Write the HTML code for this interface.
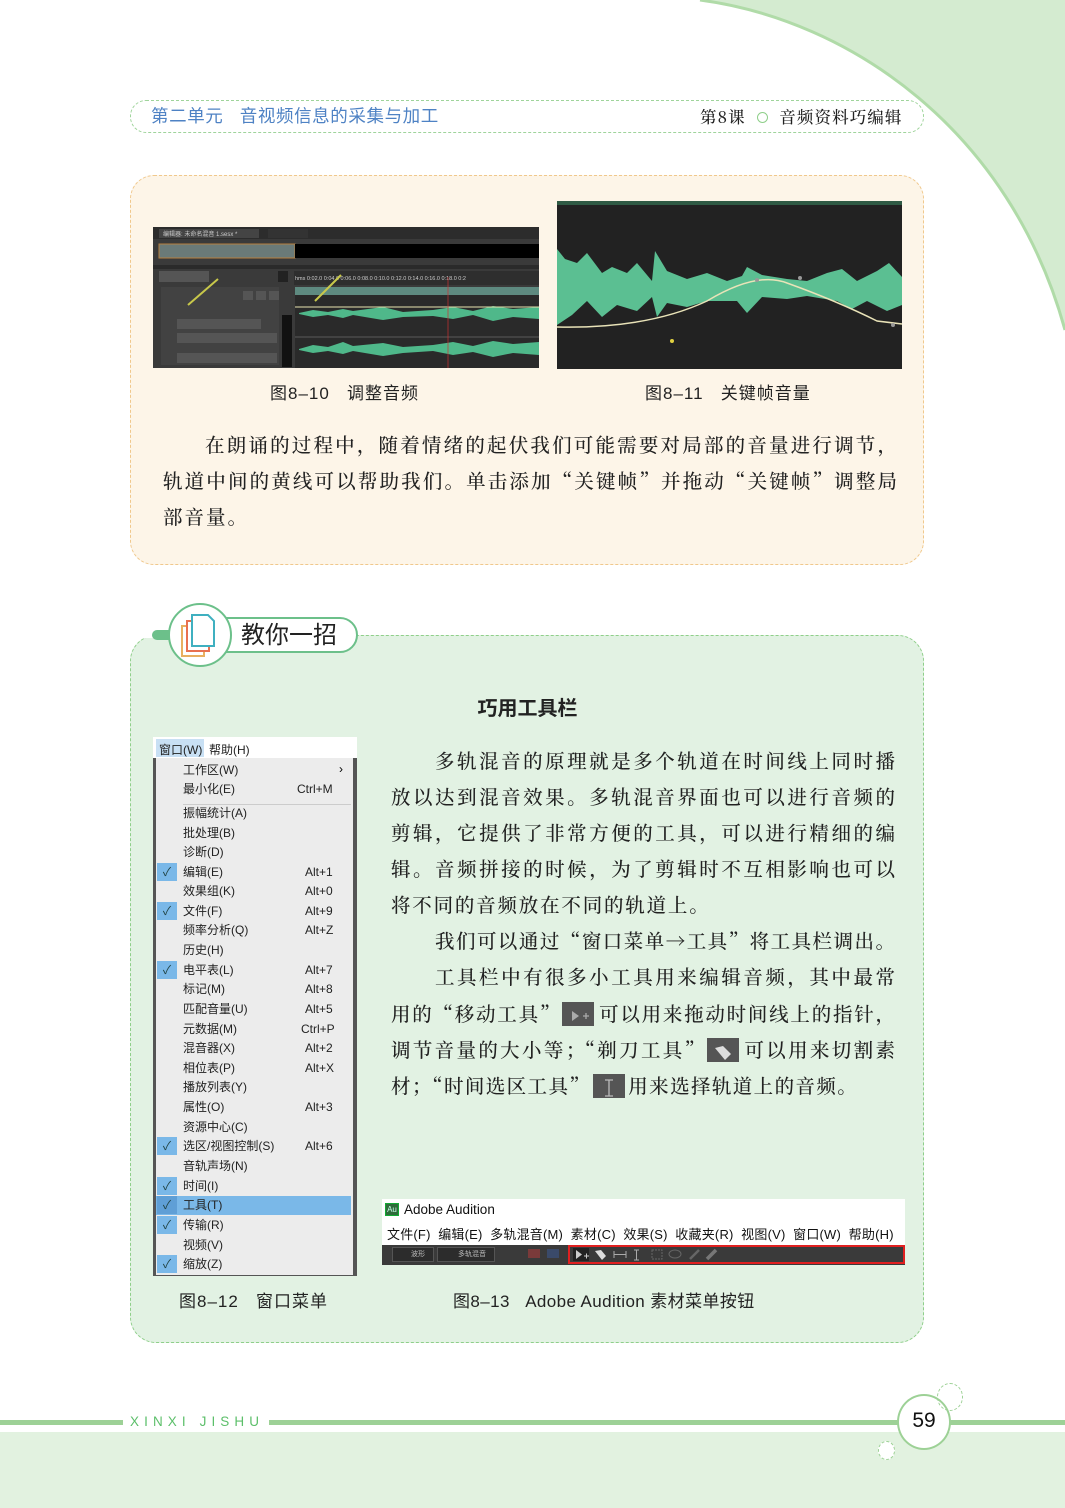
<!DOCTYPE html>
<html><head><meta charset="utf-8">
<style>
*{margin:0;padding:0;box-sizing:border-box}
body{width:1065px;height:1508px;position:relative;background:#fff;overflow:hidden;font-family:"Liberation Sans","Noto Sans CJK SC",sans-serif}
.abs{position:absolute}
.serif{font-family:"Noto Serif CJK SC","Liberation Serif",serif;font-weight:500}
.txt{position:absolute;font-size:19.5px;color:#222;text-align:justify;text-align-last:justify;white-space:nowrap;height:36px;line-height:36px}
.mi{position:absolute;left:183px;font-size:12px;color:#222;line-height:16px}
.ms{position:absolute;left:305px;font-size:12px;color:#222;line-height:16px}
.ck{position:absolute;left:157px;width:20px;height:18px;background:#7ab8e8;color:#244;font-size:12px;text-align:center;line-height:18px}
.ico{display:inline-block;width:32px;height:24px;background:#555;vertical-align:middle;position:relative;top:-2px;margin:0 3px}
</style></head><body>

<svg class="abs" style="left:0;top:0" width="1065" height="400">
<path d="M700 0 C850 20 1010 130 1065 330 L1065 0 Z" fill="#d4ebd0"/>
<path d="M700 0 C850 20 1010 130 1065 330" fill="none" stroke="#b0dba8" stroke-width="3"/>
</svg>

<div class="abs" style="left:130px;top:100px;width:794px;height:33px;border:1.5px dashed #9fd49b;border-radius:16px;background:#fff"></div>
<div class="abs" style="left:151px;top:105px;font-size:17.5px;color:#4e82c4;line-height:22px;letter-spacing:0.6px">第二单元&nbsp;&nbsp;&nbsp;音视频信息的采集与加工</div>
<div class="abs serif" style="left:700px;top:105px;font-size:16.5px;color:#222;line-height:22px;letter-spacing:1.1px">第8课 <span style="display:inline-block;width:11px;height:11px;border:1.5px solid #8fcf8a;border-radius:50%;margin:0 6px"></span> 音频资料巧编辑</div>

<div class="abs" style="left:130px;top:175px;width:794px;height:390px;background:#fdf5e8;border:1.5px dashed #f0c88c;border-radius:24px"></div>

<svg class="abs" style="left:153px;top:227px" width="386" height="141" viewBox="0 0 386 141">
<rect width="386" height="141" fill="#3a3a3a"/>
<rect x="0" y="0" width="386" height="12" fill="#2c2c2c"/>
<rect x="6" y="2" width="100" height="9" fill="#444"/>
<text x="10" y="9" font-size="6" fill="#ccc">编辑器: 未命名混音 1.sesx *</text>
<rect x="115" y="2" width="40" height="9" fill="#333"/>
<rect x="6" y="17" width="136" height="14" fill="#6a7a78" stroke="#b58040"/>
<rect x="142" y="17" width="244" height="14" fill="#000"/>
<rect x="0" y="38" width="386" height="4" fill="#2a2a2a"/>
<rect x="6" y="44" width="50" height="11" fill="#555"/>
<rect x="125" y="44" width="10" height="11" fill="#222"/>
<rect x="141" y="44" width="245" height="14" fill="#2e2e2e"/>
<text x="142" y="53" font-size="5.5" fill="#ccc">hms 0:02.0  0:04.0  0:06.0  0:08.0  0:10.0  0:12.0  0:14.0  0:16.0  0:18.0  0:2</text>
<rect x="8" y="60" width="118" height="78" fill="#424242"/>
<rect x="24" y="92" width="84" height="10" fill="#555"/>
<rect x="24" y="106" width="100" height="10" fill="#555"/>
<rect x="24" y="126" width="100" height="10" fill="#555"/>
<rect x="90" y="64" width="10" height="9" fill="#555"/><rect x="103" y="64" width="10" height="9" fill="#555"/><rect x="116" y="64" width="10" height="9" fill="#555"/>
<rect x="129" y="88" width="10" height="52" fill="#111"/>
<rect x="142" y="60" width="244" height="8" fill="#5e8a80"/>
<rect x="142" y="68" width="244" height="73" fill="#2a2a2a"/>
<path d="M146 86 L160 83 L175 85 L190 82 L200 84 L230 80 L250 85 L280 83 L300 80 L320 84 L340 79 L360 82 L386 80 L386 92 L360 90 L340 94 L320 88 L300 92 L280 89 L250 90 L230 93 L200 88 L190 91 L175 88 L160 90 L146 87Z" fill="#4fb88a"/>
<line x1="142" y1="80" x2="386" y2="80" stroke="#e8e4b0" stroke-width="1"/>
<path d="M146 122 L160 118 L175 120 L190 115 L200 119 L230 116 L250 120 L280 118 L300 115 L320 119 L340 114 L360 117 L386 115 L386 128 L360 126 L340 130 L320 125 L300 128 L280 124 L250 126 L230 129 L200 124 L190 127 L175 124 L160 126 L146 123Z" fill="#4fb88a"/>
<line x1="142" y1="110" x2="386" y2="110" stroke="#888" stroke-width=".6"/>
<line x1="295" y1="50" x2="295" y2="141" stroke="#c33" stroke-width=".7"/>
<line x1="65" y1="52" x2="35" y2="78" stroke="#c8c84a" stroke-width="2"/>
<line x1="188" y1="48" x2="162" y2="74" stroke="#c8c84a" stroke-width="2"/>
</svg>

<svg class="abs" style="left:557px;top:201px" width="345" height="168" viewBox="0 0 345 168">
<rect width="345" height="168" fill="#222"/>
<rect width="345" height="4" fill="#2f5a44"/>
<path d="M0 48 L8 58 L20 62 L30 52 L45 72 L55 66 L70 72 L80 62 L95 80 L98 50 L110 70 L130 78 L150 72 L170 80 L185 75 L190 66 L205 74 L230 78 L250 80 L270 72 L285 68 L300 80 L320 70 L332 62 L345 76 L345 104 L330 110 L310 100 L295 108 L280 100 L250 95 L230 98 L205 96 L190 112 L180 100 L150 100 L130 106 L110 102 L100 116 L95 96 L80 110 L60 104 L45 116 L30 100 L15 114 L0 124Z" fill="#5bbf92"/>
<path d="M0 126 Q90 128 150 100 Q200 70 230 82 Q280 100 320 120 L345 123" fill="none" stroke="#e9e3b8" stroke-width="1.5"/>
<circle cx="115" cy="140" r="2" fill="#e0d040"/>
<circle cx="243" cy="77" r="2" fill="#999"/><circle cx="200" cy="79" r="2" fill="#999"/><circle cx="336" cy="124" r="2" fill="#999"/>
</svg>

<div class="abs" style="left:270px;top:379px;font-size:17px;color:#222;letter-spacing:1px">图8–10&nbsp;&nbsp;&nbsp;调整音频</div>
<div class="abs" style="left:645px;top:379px;font-size:17px;color:#222;letter-spacing:1px">图8–11&nbsp;&nbsp;&nbsp;关键帧音量</div>

<div class="txt serif" style="left:163px;top:426px;width:734px;padding-left:42px">在朗诵的过程中，随着情绪的起伏我们可能需要对局部的音量进行调节，</div>
<div class="txt serif" style="left:163px;top:462px;width:734px">轨道中间的黄线可以帮助我们。单击添加“关键帧”并拖动“关键帧”调整局</div>
<div class="txt serif" style="left:163px;top:498px;width:80px;text-align-last:left;letter-spacing:2px">部音量。</div>

<div class="abs" style="left:130px;top:635px;width:794px;height:708px;background:#e2f2e3;border:1.5px dashed #8fcf8a;border-radius:26px"></div>
<div class="abs" style="left:130px;top:634px;width:40px;height:4px;background:#fff"></div>
<div class="abs" style="left:152px;top:630px;width:22px;height:10px;background:#6cc08a;border-radius:5px"></div>
<div class="abs" style="left:168px;top:617px;width:190px;height:36px;background:#fff;border:2px solid #6cc08a;border-radius:18px"></div>
<div class="abs" style="left:168px;top:603px;width:64px;height:64px;background:#fff;border:2px solid #6cc08a;border-radius:50%"></div>
<svg class="abs" style="left:178px;top:612px" width="44" height="50">
<rect x="4" y="14" width="22" height="30" fill="none" stroke="#e8b060" stroke-width="2"/>
<rect x="9" y="9" width="22" height="30" fill="#fff" stroke="#e87050" stroke-width="2"/>
<path d="M14 3 H30 L36 9 V34 H14 Z" fill="#fff" stroke="#3fb0c0" stroke-width="2"/>
</svg>
<div class="abs" style="left:241px;top:621px;font-size:24px;color:#222;line-height:30px">教你一招</div>

<div class="abs" style="left:0;top:692px;width:1055px;text-align:center;font-size:20px;font-weight:bold;color:#222">巧用工具栏</div>

<div class="abs" style="left:153px;top:737px;width:204px;height:21px;background:#fff"></div>
<div class="abs" style="left:156px;top:739px;width:48px;height:18px;background:#c8e0f4"></div>
<div class="abs" style="left:159px;top:741px;font-size:12px;color:#222">窗口(W)&nbsp;&nbsp;帮助(H)</div>
<div class="abs" style="left:153px;top:758px;width:204px;height:518px;background:#ececec;border-left:3px solid #555;border-right:4px solid #555;border-bottom:1px solid #555"></div>
<div class="abs" style="left:183px;top:804px;width:168px;height:1px;background:#ccc"></div>
<div class="abs" style="left:156px;top:1196px;width:195px;height:19px;background:#7ab8e8"></div>
<div class="mi" style="top:762px">工作区(W)</div><div class="abs" style="left:339px;top:762px;font-size:12px">›</div>
<div class="mi" style="top:781px">最小化(E)</div><div class="ms" style="left:297px;top:781px">Ctrl+M</div>
<div class="mi" style="top:805px">振幅统计(A)</div>
<div class="mi" style="top:825px">批处理(B)</div>
<div class="mi" style="top:844px">诊断(D)</div>
<div class="ck" style="top:863px">✓</div><div class="mi" style="top:864px">编辑(E)</div><div class="ms" style="top:864px">Alt+1</div>
<div class="mi" style="top:883px">效果组(K)</div><div class="ms" style="top:883px">Alt+0</div>
<div class="ck" style="top:902px">✓</div><div class="mi" style="top:903px">文件(F)</div><div class="ms" style="top:903px">Alt+9</div>
<div class="mi" style="top:922px">频率分析(Q)</div><div class="ms" style="top:922px">Alt+Z</div>
<div class="mi" style="top:942px">历史(H)</div>
<div class="ck" style="top:961px">✓</div><div class="mi" style="top:962px">电平表(L)</div><div class="ms" style="top:962px">Alt+7</div>
<div class="mi" style="top:981px">标记(M)</div><div class="ms" style="top:981px">Alt+8</div>
<div class="mi" style="top:1001px">匹配音量(U)</div><div class="ms" style="top:1001px">Alt+5</div>
<div class="mi" style="top:1021px">元数据(M)</div><div class="ms" style="left:301px;top:1021px">Ctrl+P</div>
<div class="mi" style="top:1040px">混音器(X)</div><div class="ms" style="top:1040px">Alt+2</div>
<div class="mi" style="top:1060px">相位表(P)</div><div class="ms" style="top:1060px">Alt+X</div>
<div class="mi" style="top:1079px">播放列表(Y)</div>
<div class="mi" style="top:1099px">属性(O)</div><div class="ms" style="top:1099px">Alt+3</div>
<div class="mi" style="top:1119px">资源中心(C)</div>
<div class="ck" style="top:1137px">✓</div><div class="mi" style="top:1138px">选区/视图控制(S)</div><div class="ms" style="top:1138px">Alt+6</div>
<div class="mi" style="top:1158px">音轨声场(N)</div>
<div class="ck" style="top:1177px">✓</div><div class="mi" style="top:1178px">时间(I)</div>
<div class="ck" style="top:1196px;background:#5f9fd6">✓</div><div class="mi" style="top:1197px">工具(T)</div>
<div class="ck" style="top:1216px">✓</div><div class="mi" style="top:1217px">传输(R)</div>
<div class="mi" style="top:1237px">视频(V)</div>
<div class="ck" style="top:1255px">✓</div><div class="mi" style="top:1256px">缩放(Z)</div>

<div class="txt serif" style="left:391px;top:742px;width:504px;padding-left:44px">多轨混音的原理就是多个轨道在时间线上同时播</div>
<div class="txt serif" style="left:391px;top:778px;width:504px">放以达到混音效果。多轨混音界面也可以进行音频的</div>
<div class="txt serif" style="left:391px;top:814px;width:504px">剪辑，它提供了非常方便的工具，可以进行精细的编</div>
<div class="txt serif" style="left:391px;top:850px;width:504px">辑。音频拼接的时候，为了剪辑时不互相影响也可以</div>
<div class="txt serif" style="left:391px;top:886px;width:320px;text-align-last:left;letter-spacing:1.8px">将不同的音频放在不同的轨道上。</div>
<div class="txt serif" style="left:391px;top:922px;width:504px;padding-left:44px">我们可以通过“窗口菜单→工具”将工具栏调出。</div>
<div class="txt serif" style="left:391px;top:958px;width:504px;padding-left:44px">工具栏中有很多小工具用来编辑音频，其中最常</div>
<div class="txt serif" style="left:391px;top:995px;width:504px">用的“移动工具”<span class="ico"><svg width="32" height="24"><path d="M10 7 L10 17 L17 12Z" fill="#aaa"/><path d="M21 12h6M24 9v6" stroke="#aaa" stroke-width="1.3"/></svg></span>可以用来拖动时间线上的指针，</div>
<div class="txt serif" style="left:391px;top:1031px;width:504px">调节音量的大小等；“剃刀工具”<span class="ico"><svg width="32" height="24"><path d="M8 8 L16 6 L24 14 L18 20Z" fill="#ddd"/></svg></span>可以用来切割素</div>
<div class="txt serif" style="left:391px;top:1067px;width:480px;text-align-last:left;letter-spacing:1.4px">材；“时间选区工具”<span class="ico"><svg width="32" height="24"><path d="M12 4h8M16 4v16M12 20h8" stroke="#bbb" stroke-width="1.3"/></svg></span>用来选择轨道上的音频。</div>

<div class="abs" style="left:382px;top:1199px;width:523px;height:46px;background:#fff"></div>
<div class="abs" style="left:385px;top:1203px;width:14px;height:13px;background:#2e6b3a;border:1px solid #1a3;color:#cfe;font-size:8px;line-height:11px;text-align:center">Au</div>
<div class="abs" style="left:404px;top:1202px;font-size:13.5px;color:#111">Adobe Audition</div>
<div class="abs" style="left:387px;top:1224px;font-size:13px;color:#111;letter-spacing:0.2px">文件(F)&nbsp; 编辑(E)&nbsp; 多轨混音(M)&nbsp; 素材(C)&nbsp; 效果(S)&nbsp; 收藏夹(R)&nbsp; 视图(V)&nbsp; 窗口(W)&nbsp; 帮助(H)</div>
<div class="abs" style="left:382px;top:1245px;width:523px;height:20px;background:#3a3a3a"></div>
<div class="abs" style="left:392px;top:1247px;width:42px;height:15px;background:#2c2c2c;border:1px solid #555;color:#bbb;font-size:7px;line-height:13px;padding-left:18px">波形</div>
<div class="abs" style="left:437px;top:1247px;width:58px;height:15px;background:#2c2c2c;border:1px solid #555;color:#bbb;font-size:7px;line-height:13px;padding-left:20px">多轨混音</div>
<div class="abs" style="left:528px;top:1249px;width:12px;height:9px;background:#7a3a3a"></div>
<div class="abs" style="left:547px;top:1249px;width:12px;height:9px;background:#3a4a6a"></div>
<div class="abs" style="left:568px;top:1245px;width:337px;height:19px;border:2px solid #e02020"></div>
<div class="abs" style="left:573px;top:1248px;width:16px;height:13px;background:#222"></div>
<svg class="abs" style="left:573px;top:1247px" width="160" height="15">
<path d="M3 3 L3 12 L9 7.5Z" fill="#ccc"/><path d="M11 9h5M13.5 6.5v5" stroke="#ccc"/>
<path d="M22 4 L28 3 L33 9 L29 13Z" fill="#ddd"/>
<path d="M41 7.5h12M41 4v7M53 4v7" stroke="#aaa"/>
<path d="M61 3h5M63.5 3v10M61 13h5" stroke="#aaa"/>
<rect x="79" y="3" width="10" height="9" fill="none" stroke="#666" stroke-dasharray="2 1"/>
<ellipse cx="102" cy="7" rx="6" ry="4" fill="none" stroke="#666"/>
<path d="M117 12 L126 3" stroke="#666" stroke-width="2.5"/>
<path d="M134 12 L143 3" stroke="#777" stroke-width="3.5"/>
</svg>

<div class="abs" style="left:179px;top:1287px;font-size:17px;color:#222;letter-spacing:1px">图8–12&nbsp;&nbsp;&nbsp;窗口菜单</div>
<div class="abs" style="left:453px;top:1287px;font-size:17px;color:#222;letter-spacing:0.4px">图8–13&nbsp;&nbsp;&nbsp;Adobe Audition 素材菜单按钮</div>

<div class="abs" style="left:0;top:1432px;width:1065px;height:76px;background:#e2f2e0"></div>
<div class="abs" style="left:0;top:1420px;width:1065px;height:5px;background:#9dd196"></div>
<div class="abs" style="left:123px;top:1413px;width:146px;height:18px;background:#fff"></div>
<div class="abs" style="left:130px;top:1413px;font-size:13.5px;color:#5cbf6a;letter-spacing:5.1px;line-height:17px">XINXI JISHU</div>
<div class="abs" style="left:897px;top:1394px;width:54px;height:56px;background:#fff;border:2px solid #9dd196;border-radius:50%"></div>
<div class="abs" style="left:897px;top:1409px;width:54px;text-align:center;font-size:21px;color:#111">59</div>
<div class="abs" style="left:937px;top:1383px;width:26px;height:28px;border:1px dashed #9dd196;border-radius:50%"></div>
<div class="abs" style="left:878px;top:1441px;width:17px;height:19px;border:1px dashed #9dd196;border-radius:50%;background:#fff"></div>
</body></html>
